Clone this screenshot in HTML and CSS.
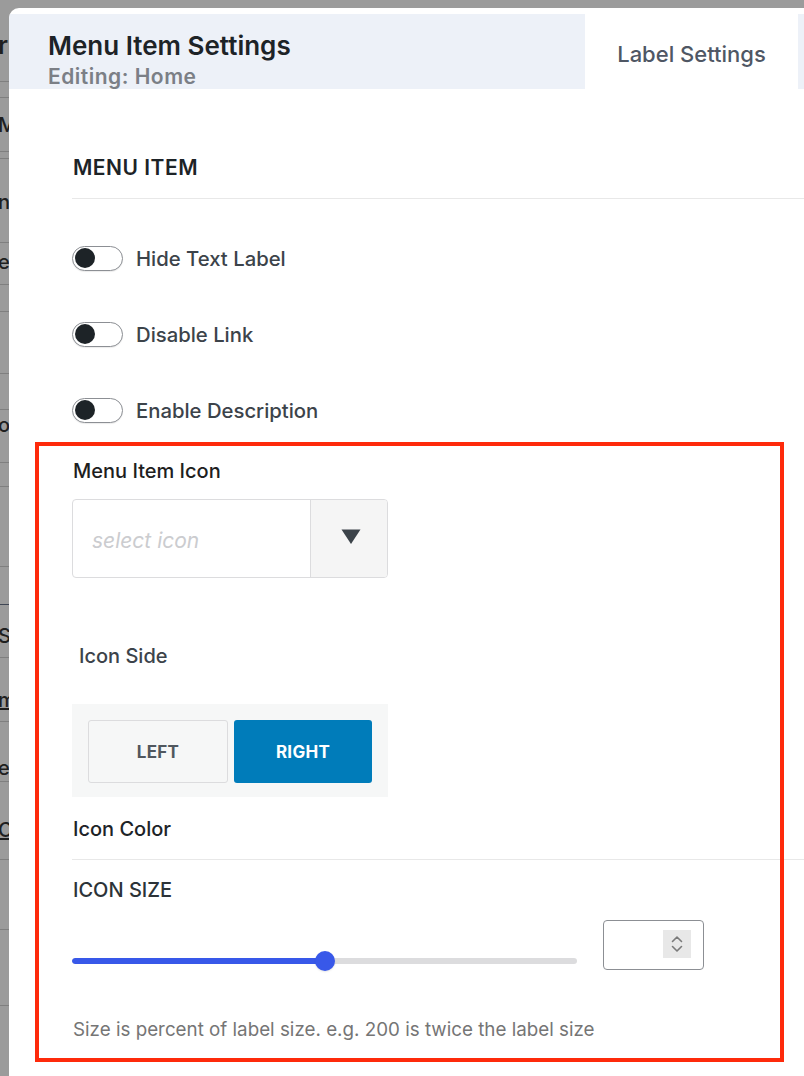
FILE: index.html
```html
<!DOCTYPE html>
<html lang="en">
<head>
<meta charset="utf-8">
<title>Menu Item Settings</title>
<link rel="stylesheet" href="styles.css">
</head>
<body>
<div class="screen">
  <aside class="backdrop">
    <div class="bd">r</div>
    <div class="bd"></div>
    <div class="bd">M</div>
    <div class="bd"></div>
    <div class="bd">n</div>
    <div class="bd">et</div>
    <div class="bd"></div>
    <div class="bd"></div>
    <div class="bd"></div>
    <div class="bd">o</div>
    <div class="bd"></div>
    <div class="bd"></div>
    <div class="bd"></div>
    <div class="bd">Se</div>
    <div class="bd bd-under">m</div>
    <div class="bd">e</div>
    <div class="bd bd-under">C</div>
    <div class="bd"></div>
    <div class="bd"></div>
    <div class="bd"></div>
  </aside>

  <main class="modal">
    <header class="modal-head">
      <div class="head-title">
        <div class="title">Menu Item Settings</div>
        <div class="subtitle">Editing: Home</div>
      </div>
      <div class="tab tab-active">Label Settings</div>
      <div class="tab tab-next"></div>
    </header>

    <section class="content">
      <div class="section-title">MENU ITEM</div>

      <div class="toggle-row">
        <span class="toggle"><span class="knob"></span></span>
        <span class="toggle-label">Hide Text Label</span>
      </div>
      <div class="toggle-row">
        <span class="toggle"><span class="knob"></span></span>
        <span class="toggle-label">Disable Link</span>
      </div>
      <div class="toggle-row">
        <span class="toggle"><span class="knob"></span></span>
        <span class="toggle-label">Enable Description</span>
      </div>

      <div class="field-label label-icon">Menu Item Icon</div>
      <div class="select">
        <div class="select-value">select icon</div>
        <div class="select-btn">
          <svg width="20" height="15" viewBox="0 0 20 15"><path d="M0.5 0.5h19L10 15z" fill="#3c434a"/></svg>
        </div>
      </div>

      <div class="field-label label-side">Icon Side</div>
      <div class="btn-group">
        <div class="seg seg-off">LEFT</div>
        <div class="seg seg-on">RIGHT</div>
      </div>

      <div class="field-label label-color">Icon Color</div>

      <div class="field-label label-size">ICON SIZE</div>
      <div class="range-row">
        <div class="range">
          <div class="range-track">
            <div class="range-fill" style="width:50%"></div>
          </div>
          <div class="range-thumb" style="left:50%"></div>
        </div>
        <div class="number">
          <div class="spin">
            <svg width="28" height="28" viewBox="0 0 28 28">
              <path d="M9.5 11.5l4.5-4.5 4.5 4.5" fill="none" stroke="#7a7a7a" stroke-width="1.6" stroke-linecap="round" stroke-linejoin="round"/>
              <path d="M9.5 16.5l4.5 4.5 4.5-4.5" fill="none" stroke="#7a7a7a" stroke-width="1.6" stroke-linecap="round" stroke-linejoin="round"/>
            </svg>
          </div>
        </div>
      </div>

      <p class="help">Size is percent of label size. e.g. 200 is twice the label size</p>
    </section>
  </main>

  <div class="highlight"></div>
</div>
</body>
</html>
```

FILE: styles.css
```css
* { box-sizing: border-box; }

html, body {
  margin: 0;
  padding: 0;
}

body {
  font-family: Inter, "Noto Sans", "Liberation Sans", sans-serif;
  background: #9b9b9b;
  color: #1d2327;
}

.screen {
  position: relative;
  display: flex;
  width: 804px;
  height: 1076px;
  overflow: hidden;
  background: #9b9b9b;
}

/* ---- backdrop page fragments ---- */
.backdrop {
  flex: 0 0 9px;
  width: 9px;
  overflow: hidden;
  display: flex;
  flex-direction: column;
  color: #1f1f1f;
  font-size: 20px;
  font-weight: 500;
  line-height: 20px;
  white-space: nowrap;
}

.bd {
  flex: none;
  text-indent: -2px;
  border-bottom: 1px solid #7f7f7f;
}
.bd-under { text-decoration: underline; }

.bd:nth-child(1)  { height: 82px; padding-top: 30px; font-size: 25px; font-weight: 600; line-height: 30px; }
.bd:nth-child(2)  { height: 16px; }
.bd:nth-child(3)  { height: 54px; padding-top: 17px; }
.bd:nth-child(4)  { height: 7px; }
.bd:nth-child(5)  { height: 84px; padding-top: 33px; }
.bd:nth-child(6)  { height: 42px; padding-top: 9px; }
.bd:nth-child(7)  { height: 27px; }
.bd:nth-child(8)  { height: 62px; }
.bd:nth-child(9)  { height: 36px; }
.bd:nth-child(10) { height: 53px; padding-top: 5px; }
.bd:nth-child(11) { height: 24px; }
.bd:nth-child(12) { height: 80px; }
.bd:nth-child(13) { height: 38px; border-bottom-color: #3f4654; }
.bd:nth-child(14) { height: 53px; padding-top: 21px; }
.bd:nth-child(15) { height: 64px; padding-top: 32px; }
.bd:nth-child(16) { height: 60px; padding-top: 36px; }
.bd:nth-child(17) { height: 78px; padding-top: 38px; }
.bd:nth-child(18) { height: 70px; }
.bd:nth-child(19) { height: 76px; }
.bd:nth-child(20) { height: 70px; border-bottom: 0; }

/* ---- modal ---- */
.modal {
  flex: 1 0 auto;
  width: 795px;
  margin-top: 8px;
  background: #fff;
  border-top-left-radius: 10px;
  padding-top: 6px;
  overflow: hidden;
}

.modal-head {
  display: flex;
  height: 75px;
}

.head-title {
  flex: 0 0 576px;
  background: #edf1f8;
  padding: 17px 0 0 39px;
}

.title {
  font-size: 26px;
  line-height: 30px;
  font-weight: 600;
  color: #1d2327;
}

.subtitle {
  margin-top: 4px;
  font-size: 21px;
  line-height: 24px;
  font-weight: 600;
  letter-spacing: 0.5px;
  color: #7b7f86;
}

.tab {
  flex: 0 0 213px;
  display: flex;
  align-items: center;
  justify-content: center;
  font-size: 22px;
  font-weight: 500;
  color: #4f5764;
  padding-top: 4px;
}

.tab-active { background: #fff; }
.tab-next { flex: 1 0 60px; background: #edf1f8; }

/* ---- content ---- */
.content {
  padding-left: 63px;
}

.section-title {
  margin-top: 65px;
  padding: 0 0 16px 1px;
  font-size: 21px;
  line-height: 28px;
  font-weight: 600;
  letter-spacing: 0.5px;
  color: #1d2327;
  border-bottom: 1px solid #e8e8e8;
}

.toggle-row {
  display: flex;
  align-items: center;
  gap: 13px;
  height: 76px;
}
.section-title + .toggle-row { margin-top: 21px; }

.toggle {
  position: relative;
  flex: none;
  width: 51px;
  height: 25px;
  border: 1px solid #8c8f94;
  border-radius: 13px;
  background: #fff;
  box-shadow: 0 1px 1px rgba(0,0,0,0.08);
}

.knob {
  position: absolute;
  left: 2px;
  top: 1.5px;
  width: 20px;
  height: 20px;
  border-radius: 50%;
  background: #1d2327;
}

.toggle-label {
  font-size: 20.3px;
  font-weight: 500;
  color: #3c434a;
}

.field-label {
  font-size: 20px;
  line-height: 28px;
  font-weight: 500;
}

.label-icon { margin-top: 9px; padding-left: 1px; color: #1e1e1e; }
.label-side { margin-top: 64px; padding-left: 7px; color: #3c434a; }
.label-color {
  margin-top: 18px;
  padding: 0 0 16px 1px;
  color: #1d2327;
  border-bottom: 1px solid #e8e8e8;
}
.label-size { margin-top: 16px; padding-left: 1px; color: #2c3338; }

/* select */
.select {
  display: flex;
  width: 316px;
  height: 79px;
  margin-top: 14px;
  border: 1px solid #dcdcde;
  border-radius: 4px;
  overflow: hidden;
}

.select-value {
  flex: 1;
  display: flex;
  align-items: center;
  padding: 3px 0 0 19px;
  font-size: 21px;
  font-style: italic;
  color: #cbcccf;
}

.select-btn {
  flex: 0 0 77px;
  display: flex;
  align-items: center;
  justify-content: center;
  background: #f5f5f5;
  border-left: 1px solid #dcdcde;
  padding-bottom: 4px;
  padding-left: 3px;
}

/* segmented buttons */
.btn-group {
  display: flex;
  gap: 6px;
  width: 316px;
  margin-top: 34px;
  padding: 16px 16px 14px;
  background: #f6f7f7;
}

.seg {
  flex: 1;
  height: 63px;
  display: flex;
  align-items: center;
  justify-content: center;
  border-radius: 3px;
  font-size: 17px;
  font-weight: 700;
  letter-spacing: 0.3px;
}

.seg-off {
  background: #f6f7f7;
  border: 1px solid #dcdcde;
  color: #50575e;
}

.seg-on {
  background: #007cba;
  color: #fff;
}

/* range */
.range-row {
  display: flex;
  align-items: flex-end;
  gap: 26px;
  margin-top: 16px;
}

.range {
  position: relative;
  flex: 0 0 505px;
  height: 20px;
  margin-bottom: -1px;
}

.range-track {
  position: absolute;
  left: 0;
  right: 0;
  top: 7px;
  height: 6px;
  border-radius: 3px;
  background: #dcdcde;
  overflow: hidden;
}

.range-fill {
  height: 100%;
  background: #3858e9;
  border-radius: 3px;
}

.range-thumb {
  position: absolute;
  top: 0;
  width: 20px;
  height: 20px;
  margin-left: -10px;
  border-radius: 50%;
  background: #3858e9;
  box-shadow: 0 1px 2px rgba(0,0,0,0.1);
}

.number {
  flex: 0 0 101px;
  height: 50px;
  border: 1px solid #8c8f94;
  border-radius: 4px;
  display: flex;
  align-items: center;
  justify-content: flex-end;
  padding-right: 12px;
}

.spin {
  width: 28px;
  height: 28px;
  background: #e8e8e8;
  margin-bottom: 2px;
}
.spin svg { display: block; }

.help {
  margin: 48px 0 0 1px;
  font-size: 18.8px;
  line-height: 24px;
  color: #757575;
}

/* annotation box over content */
.highlight {
  position: absolute;
  left: 35px;
  top: 442px;
  width: 749px;
  height: 620px;
  border: 4px solid #fe2a0b;
  pointer-events: none;
}
```
